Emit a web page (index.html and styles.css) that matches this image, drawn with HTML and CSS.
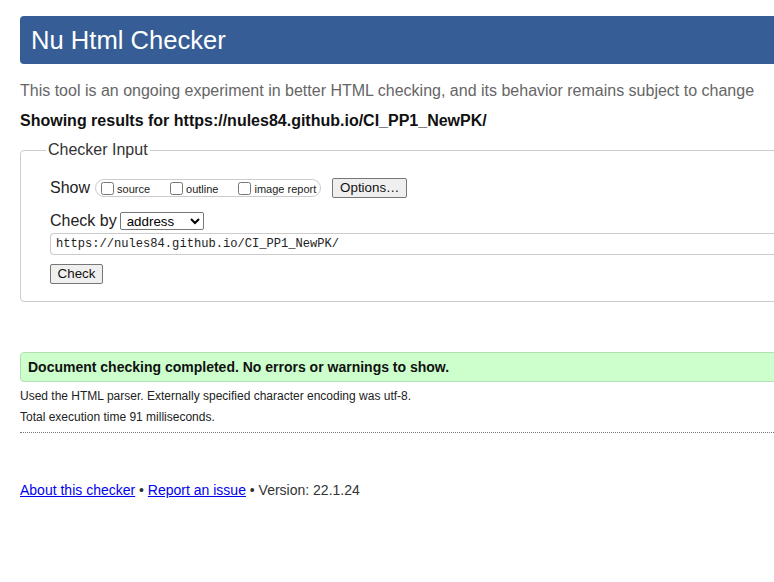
FILE: index.html
```html
<!DOCTYPE html>
<html>
<head>
<meta charset="utf-8">
<title>Nu Html Checker</title>
<link rel="stylesheet" href="styles.css">
</head>
<body>
<div class="page">
  <h1 class="banner">Nu Html Checker</h1>
  <p class="intro">This tool is an ongoing experiment in better HTML checking, and its behavior remains subject to change</p>
  <p class="showing">Showing results for https://nules84.github.io/CI_PP1_NewPK/</p>
  <fieldset class="input-box">
    <legend class="legend">Checker Input</legend>
    <div class="row show-row">
      <span class="label">Show</span>
      <span class="pill">
        <label class="opt"><input type="checkbox" class="cb">source</label>
        <label class="opt"><input type="checkbox" class="cb">outline</label>
        <label class="opt last"><input type="checkbox" class="cb">image report</label>
      </span>
      <button class="btn options">Options…</button>
    </div>
    <div class="row by-row">
      <span class="label">Check by</span>
      <select class="sel"><option>address</option></select>
    </div>
    <div class="url">https://nules84.github.io/CI_PP1_NewPK/</div>
    <button class="btn check">Check</button>
  </fieldset>
  <p class="success">Document checking completed. No errors or warnings to show.</p>
  <p class="meta">Used the HTML parser. Externally specified character encoding was utf-8.</p>
  <p class="meta">Total execution time 91 milliseconds.</p>
  <hr class="dots">
  <p class="footer"><a href="#" class="link">About this checker</a> • <a href="#" class="link">Report an issue</a> • Version: 22.1.24</p>
</div>
</body>
</html>
```
FILE: styles.css
```css
html, body {
  overflow: hidden;
}
body {
  margin: 0;
  padding: 16px 0 0 20px;
  font-family: "Liberation Sans", Arial, sans-serif;
  color: #222;
  background: #fff;
}
.page {
  width: 820px;
}
.banner {
  margin: 0;
  height: 48px;
  box-sizing: border-box;
  padding: 0 0 0 11px;
  background: #365d95;
  color: #fff;
  font-weight: normal;
  font-size: 25.6px;
  line-height: 48px;
  border-radius: 4px;
}
.intro {
  margin: 18px 0 0;
  font-size: 16px;
  line-height: 18px;
  color: #666;
}
.showing {
  margin: 12px 0 0;
  font-size: 16px;
  line-height: 18px;
  font-weight: bold;
  color: #111;
}
.input-box {
  margin: 11px 0 0;
  padding: 19px 0 17px 29px;
  border: 1px solid #ccc;
  border-radius: 4px;
}
.legend {
  font-size: 16px;
  line-height: 18px;
  padding: 0 2px;
  margin-left: -4px;
  color: #333;
}
.row {
  display: flex;
  align-items: center;
}
.label {
  font-size: 16px;
  color: #222;
}
.show-row {
  height: 20px;
}
.pill {
  display: flex;
  align-items: center;
  height: 18px;
  box-sizing: border-box;
  margin-left: 5px;
  padding: 0 4px 0 5px;
  border: 1px solid #ccc;
  border-radius: 9px;
  font-size: 11px;
}
.opt {
  display: flex;
  align-items: center;
  margin-right: 20px;
  line-height: 12px;
  padding-top: 2px;
}
.opt.last {
  margin-right: 0;
}
.cb {
  width: 13px;
  height: 13px;
  margin: 0 3px 2px 0;
}
.btn {
  font-family: "Liberation Sans", Arial, sans-serif;
  font-size: 13.33px;
  background: #efefef;
  color: #111;
  border: 1px solid #767676;
  border-radius: 2px;
  padding: 0 6px;
  height: 20px;
  line-height: 18px;
}
.options {
  margin-left: 11px;
  width: 75px;
}
.by-row {
  margin-top: 14px;
  height: 18px;
}
.sel {
  margin-left: 3px;
  width: 84px;
  height: 18px;
  font-family: "Liberation Sans", Arial, sans-serif;
  font-size: 13.33px;
  border: 1px solid #767676;
  border-radius: 2px;
  background: #fff;
  padding: 0 0 0 2px;
}
.url {
  margin-top: 3px;
  height: 22px;
  box-sizing: border-box;
  border: 1px solid #ccc;
  border-right: none;
  border-radius: 4px 0 0 4px;
  padding: 0 0 0 5px;
  font-family: "Liberation Mono", "DejaVu Sans Mono", monospace;
  font-size: 12.1px;
  line-height: 20px;
  color: #222;
}
.check {
  display: block;
  margin-top: 9px;
  width: 53px;
  padding: 0;
}
.success {
  margin: 50px 0 0;
  height: 30px;
  box-sizing: border-box;
  background: #ccffcc;
  border: 1px solid #b4deb4;
  border-radius: 4px;
  padding: 0 0 0 7px;
  font-size: 14px;
  font-weight: bold;
  line-height: 28px;
  color: #111;
}
.meta {
  margin: 7px 0 0;
  font-size: 12px;
  line-height: 14px;
  color: #222;
}
.meta + .meta {
  margin-top: 7px;
}
.dots {
  margin: 8px 0 0;
  border: none;
  border-top: 1px dotted #777;
  height: 0;
}
.footer {
  margin: 49px 0 0;
  font-size: 14px;
  line-height: 16px;
  color: #333;
}
.link {
  color: #0000ee;
  text-decoration: underline;
}
```
